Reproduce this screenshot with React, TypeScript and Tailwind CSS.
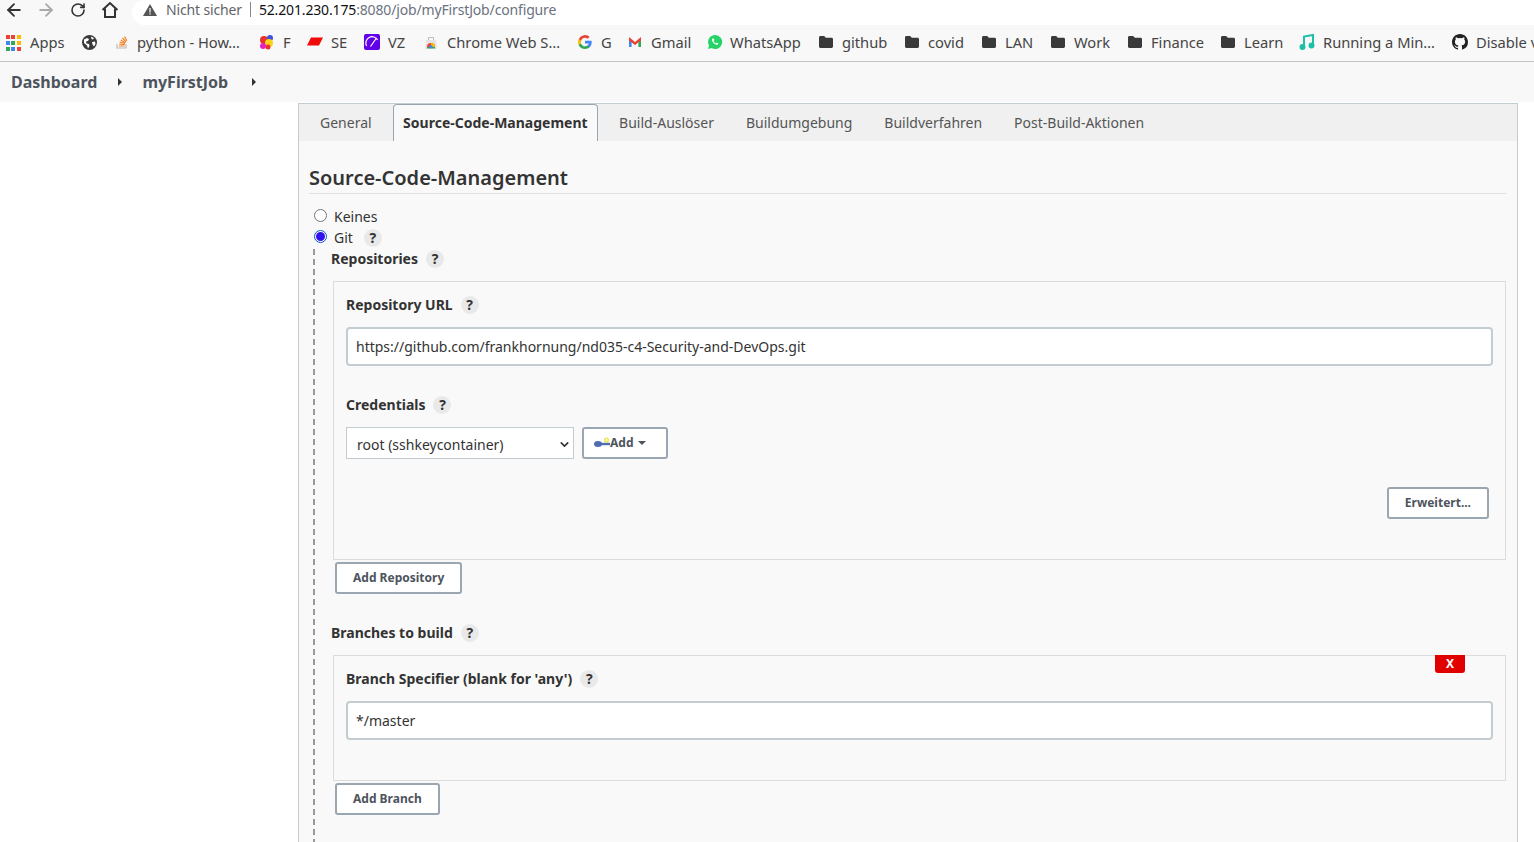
import { ArrowLeft, ArrowRight, RotateCw, ChevronDown } from "lucide-react";
import type { ReactNode } from "react";

const font = "font-['Noto_Sans',sans-serif]";

function Folder() {
  return (
    <svg width="16" height="14" viewBox="0 0 16 14" className="fill-[#3a3a3a]">
      <path d="M1 2.500C1 1.700 1.600 1 2.400 1h3.800l1.600 1.800h5.800c.8 0 1.400.6 1.400 1.400v7.400c0 .8-.6 1.400-1.400 1.400H2.400C1.600 13 1 12.400 1 11.600z" />
    </svg>
  );
}

function HomeIcon() {
  return (
    <svg width="18" height="18" viewBox="0 0 18 18" fill="none" stroke="#333" strokeWidth="2" strokeLinejoin="miter">
      <path d="M1.500 9 9 2l7.500 7" />
      <path d="M4 7.500V16h10V7.500" />
    </svg>
  );
}

function GlobeIcon() {
  return (
    <svg width="15" height="15" viewBox="0 0 15 15">
      <circle cx="7.500" cy="7.500" r="7.500" fill="#3a3a3a" />
      <path d="M2 4.500 5 3l2 1-1 2-2 .5.500 2 2.500.5.500 2-1.500 2.500-1-3L2 8zM9 1.500l3 1.500-1 1.500L9.500 4zM10 7l3-.5.500 2.500-1.500 2.500-1.500-2z" fill="#fff" />
    </svg>
  );
}

function AppsIcon() {
  const colors = ["#ea4335", "#ea4335", "#fbbc04", "#4285f4", "#34a853", "#fbbc04", "#34a853", "#4285f4", "#ea4335"];
  return (
    <div className="grid h-[14px] w-[14px] grid-cols-3 gap-[2px]">
      {colors.map((c, i) => (
        <svg key={i} width="4" height="4"><rect width="4" height="4" fill={c} /></svg>
      ))}
    </div>
  );
}

function StackIcon() {
  return (
    <svg width="16" height="16" viewBox="0 0 16 16" fill="none" strokeWidth="1.200">
      <path d="M3 10v4h9v-4" stroke="#bcbbbb" />
      <path d="M5 12h5.500M5.200 10l5.400.7M5.700 8l5.200 1.500M6.800 6l4.600 2.700M8.500 4l3.600 3.800M10.600 2.500l2.200 4.300" stroke="#f48024" />
    </svg>
  );
}

function ColorBlob() {
  return (
    <svg width="16" height="16" viewBox="0 0 16 16">
      <circle cx="5" cy="6" r="4" fill="#e8322c" />
      <circle cx="11" cy="4" r="3" fill="#3f51e0" />
      <circle cx="10" cy="9" r="4" fill="#f7d417" />
      <circle cx="4" cy="12" r="3" fill="#e91fc4" />
      <circle cx="9" cy="13" r="2.500" fill="#e8322c" />
    </svg>
  );
}

function SeIcon() {
  return (
    <svg width="16" height="16" viewBox="0 0 16 16">
      <path d="M4 3.500h12L12 11.500H0z" fill="#f00a0a" />
    </svg>
  );
}

function VzIcon() {
  return (
    <svg width="16" height="16" viewBox="0 0 16 16">
      <rect width="16" height="16" rx="2" fill="#6200ea" />
      <path d="M2.600 12A6.200 6.200 0 0 1 13.600 6" stroke="#fff" strokeWidth="1.200" fill="none" />
      <path d="M6.500 12.500 12.500 4" stroke="#fff" strokeWidth="1.200" fill="none" />
    </svg>
  );
}

function ChromeStoreIcon() {
  return (
    <svg width="16" height="16" viewBox="0 0 16 16">
      <path d="M3 6h10l1 9H2z" fill="#e4e4e4" />
      <path d="M5.500 6V3.500h5V6" stroke="#bbb" fill="none" />
      <path d="M4 13a4 4 0 0 1 8 0z" fill="#ea4335" />
      <path d="M8 13V9a4 4 0 0 1 4 4z" fill="#fbbc04" />
      <path d="M4 13h8v1.500H4z" fill="#34a853" />
      <circle cx="8" cy="12.600" r="1.600" fill="#4285f4" />
    </svg>
  );
}

function GoogleIcon() {
  return (
    <svg width="14" height="14" viewBox="0 0 18 18">
      <path d="M17.600 9.200c0-.6-.1-1.200-.2-1.800H9v3.500h4.800a4.100 4.100 0 0 1-1.800 2.700v2.200h2.900c1.700-1.600 2.700-3.900 2.700-6.600z" fill="#4285f4" />
      <path d="M9 18c2.400 0 4.500-.8 5.900-2.200L12 13.600c-.8.5-1.800.9-3 .9-2.300 0-4.300-1.600-5-3.700H1v2.300A9 9 0 0 0 9 18z" fill="#34a853" />
      <path d="M4 10.700a5.400 5.400 0 0 1 0-3.400V5H1a9 9 0 0 0 0 8z" fill="#fbbc05" />
      <path d="M9 3.600c1.300 0 2.500.5 3.400 1.300l2.600-2.600A9 9 0 0 0 1 5l3 2.300c.7-2.100 2.700-3.700 5-3.700z" fill="#ea4335" />
    </svg>
  );
}

function GmailIcon() {
  return (
    <svg width="14" height="14" viewBox="0 0 14 14">
      <path d="M1 3v9h2.600V6z" fill="#4285f4" />
      <path d="M10.400 6v6H13V3z" fill="#34a853" />
      <path d="M1 2 7 7l6-5v3.400L7 10 1 5.400z" fill="#ea4335" />
    </svg>
  );
}

function WhatsappIcon() {
  return (
    <svg width="16" height="16" viewBox="0 0 16 16">
      <path d="M8 1a7 7 0 0 0-6 10.500L1 15l3.600-1A7 7 0 1 0 8 1z" fill="#25d366" />
      <path d="M5.500 4.500c-.9.9-.8 2.400.6 4.100 1.500 1.800 3.200 2.600 4.300 2.100.7-.3 1-1 .9-1.400L9.800 8.500l-.9.9C8 9 7 8 6.600 7l.9-.9-.9-1.700z" fill="#fff" />
    </svg>
  );
}

function MusicIcon() {
  return (
    <svg width="16" height="18" viewBox="0 0 16 18" fill="none" stroke="#1fbfa8" strokeWidth="2">
      <path d="M5 14V3.500l9-1.500v10" />
      <circle cx="3.500" cy="14" r="2" fill="#1fbfa8" />
      <circle cx="12.500" cy="12.500" r="2" fill="#1fbfa8" />
    </svg>
  );
}

function GithubIcon() {
  return (
    <svg width="16" height="16" viewBox="0 0 16 16" className="fill-[#222]">
      <path d="M8 0C3.580 0 0 3.580 0 8c0 3.540 2.290 6.530 5.470 7.590.4.070.55-.17.55-.38v-1.340c-2.230.48-2.700-1.070-2.700-1.070-.36-.92-.89-1.170-.89-1.170-.73-.5.060-.49.060-.49.800.06 1.230.82 1.230.82.710 1.220 1.870.87 2.330.66.070-.52.280-.87.510-1.070-1.780-.2-3.640-.89-3.640-3.950 0-.87.310-1.590.82-2.150-.08-.2-.36-1.020.08-2.120 0 0 .67-.21 2.200.82a7.600 7.600 0 0 1 4 0c1.530-1.040 2.200-.82 2.200-.82.44 1.100.16 1.920.08 2.120.51.560.82 1.270.82 2.150 0 3.070-1.870 3.750-3.650 3.950.29.250.54.730.54 1.480v2.200c0 .21.150.46.55.38A8 8 0 0 0 16 8c0-4.420-3.580-8-8-8z" />
    </svg>
  );
}

const bookmarks: { width: string; gap: string; icon: ReactNode; label: string }[] = [
  { width: "w-[76px]", gap: "gap-[10px]", icon: <AppsIcon />, label: "Apps" },
  { width: "w-[32px]", gap: "gap-0", icon: <GlobeIcon />, label: "" },
  { width: "w-[145px]", gap: "gap-[7px]", icon: <StackIcon />, label: "python - How…" },
  { width: "w-[48px]", gap: "gap-[8px]", icon: <ColorBlob />, label: "F" },
  { width: "w-[57px]", gap: "gap-[8px]", icon: <SeIcon />, label: "SE" },
  { width: "w-[59px]", gap: "gap-[8px]", icon: <VzIcon />, label: "VZ" },
  { width: "w-[155px]", gap: "gap-[8px]", icon: <ChromeStoreIcon />, label: "Chrome Web S…" },
  { width: "w-[50px]", gap: "gap-[9px]", icon: <GoogleIcon />, label: "G" },
  { width: "w-[79px]", gap: "gap-[9px]", icon: <GmailIcon />, label: "Gmail" },
  { width: "w-[111px]", gap: "gap-[7px]", icon: <WhatsappIcon />, label: "WhatsApp" },
  { width: "w-[86px]", gap: "gap-[8px]", icon: <Folder />, label: "github" },
  { width: "w-[77px]", gap: "gap-[8px]", icon: <Folder />, label: "covid" },
  { width: "w-[69px]", gap: "gap-[8px]", icon: <Folder />, label: "LAN" },
  { width: "w-[77px]", gap: "gap-[8px]", icon: <Folder />, label: "Work" },
  { width: "w-[93px]", gap: "gap-[8px]", icon: <Folder />, label: "Finance" },
  { width: "w-[79px]", gap: "gap-[8px]", icon: <Folder />, label: "Learn" },
  { width: "w-[153px]", gap: "gap-[8px]", icon: <MusicIcon />, label: "Running a Min…" },
  { width: "w-[90px]", gap: "gap-[8px]", icon: <GithubIcon />, label: "Disable v" },
];

const tabs = ["General", "Source-Code-Management", "Build-Auslöser", "Buildumgebung", "Buildverfahren", "Post-Build-Aktionen"];

function Help({ className = "ml-[8px]" }: { className?: string }) {
  return (
    <span className={`flex h-[18px] w-[18px] items-center justify-center rounded-full bg-[#e9e9e9] text-[14px] font-bold text-[#333] ${className}`}>
      ?
    </span>
  );
}

function Label({ children, className = "" }: { children: ReactNode; className?: string }) {
  return (
    <div className={`flex h-[20px] items-center text-[14px] leading-[20px] font-bold text-[#333] ${className}`}>
      {children}
      <Help />
    </div>
  );
}

function Btn({ children, className = "" }: { children: ReactNode; className?: string }) {
  return (
    <button className={`flex h-[32px] items-center rounded-[3px] border-2 border-[#9aa7b3] bg-white text-[12px] font-bold text-[#4d545d] ${className}`}>
      {children}
    </button>
  );
}

function TextInput({ value }: { value: string }) {
  return (
    <div className="mt-[12px] flex h-[39px] items-center rounded-[4px] border-2 border-[#c3ccd1] bg-white pl-[8px] text-[14px] text-[#333]">
      {value}
    </div>
  );
}

export default function App() {
  return (
    <div className={`h-[842px] w-[1534px] overflow-hidden bg-white ${font}`}>
      <div className="flex h-[25px] items-center bg-[#f8f8f8] text-[#5f6368]">
        <div className="flex h-[25px] w-[132px] items-center pb-[5px] pl-[4px]">
          <ArrowLeft size={20} strokeWidth={2.200} className="text-[#333]" />
          <ArrowRight size={20} strokeWidth={2.200} className="ml-[12px] text-[#aaa]" />
          <RotateCw size={16} strokeWidth={2.400} className="ml-[14px] text-[#333]" />
          <span className="ml-[15px]"><HomeIcon /></span>
        </div>
        <div className="flex h-[25px] flex-1 items-center rounded-l-full bg-white pb-[6px] pl-[10px] text-[14px] tracking-[-0.15px]">
          <svg width="16" height="14" viewBox="0 0 16 14" className="fill-[#555]">
            <path d="M8 1 15 13H1z" />
            <path d="M7.400 5h1.200v4.500H7.400zM7.400 10.300h1.200v1.200H7.400z" fill="#fff" />
          </svg>
          <span className="ml-[8px] text-[#5f6368]">Nicht sicher</span>
          <span className="mr-[5px] ml-[8px] h-[15px] w-px bg-[#888]" />
          <span className="ml-[3px] text-[#111]">52.201.230.175</span>
          <span className="text-[#6b7280]">:8080/job/myFirstJob/configure</span>
        </div>
      </div>

      <div className="flex h-[37px] items-center overflow-hidden border-b border-[#c4c4c4] bg-[#f8f8f8] pb-[2px] pl-[6px] text-[14.700px] whitespace-nowrap text-[#444]">
        {bookmarks.map((b) => (
          <div key={b.label || "globe"} className={`flex shrink-0 items-center ${b.gap} ${b.width}`}>
            {b.icon}
            {b.label && <span>{b.label}</span>}
          </div>
        ))}
      </div>

      <div className="flex h-[40px] items-center bg-[#f8f8f8] pl-[11px] text-[16px] font-bold text-[#4d545d]">
        <span>Dashboard</span>
        <span className="mx-[21px] h-0 w-0 border-y-[4px] border-l-[4px] border-y-transparent border-l-[#333]" />
        <span className="-ml-[1px]">myFirstJob</span>
        <span className="ml-[24px] h-0 w-0 border-y-[4px] border-l-[4px] border-y-transparent border-l-[#333]" />
      </div>

      <div className="mt-[1px] ml-[298px] h-[739px] w-[1220px] border-t border-r border-l border-[#c3ccd1] bg-[#f9f9f9]">
        <div className="flex h-[37px] items-end bg-[#f0f0f0] text-[14px] text-[#555]">
          {tabs.map((t, i) =>
            t === "Source-Code-Management" ? (
              <div
                key={t}
                className="flex h-[37px] items-center rounded-t-[4px] border-x border-t border-[#9aa7b3] bg-[#f9f9f9] px-[9.500px] pb-[1px] font-bold text-[#333]"
              >
                {t}
              </div>
            ) : (
              <div key={t} className={`flex h-[37px] items-center ${i === 0 ? "px-[21px]" : i === 2 ? "pr-[32px] pl-[21px]" : "pr-[32px]"}`}>
                {t}
              </div>
            )
          )}
        </div>

        <div className="pr-[11px] pl-[10px]">
          <h2 className="mt-[22px] border-b border-[#e0e0e0] text-[20px] leading-[30px] font-semibold text-[#333]">
            Source-Code-Management
          </h2>

          <div className="mt-[12px] flex h-[21px] items-center text-[14px] text-[#333]">
            <span className="mb-[2px] ml-[5px] h-[13px] w-[13px] rounded-full border border-[#767676] bg-white" />
            <span className="ml-[7px]">Keines</span>
          </div>
          <div className="flex h-[21px] items-center text-[14px] text-[#333]">
            <span className="mb-[2px] ml-[5px] flex h-[13px] w-[13px] items-center justify-center rounded-full border border-[#0b57d0] bg-white">
              <span className="h-[9px] w-[9px] rounded-full bg-[#3311ee]" />
            </span>
            <span className="ml-[7px]">Git</span>
            <Help className="ml-[11px]" />
          </div>

          <div className="mt-[1px] ml-[4px] border-l-2 border-dashed border-[#999] pl-[16px]">
            <Label>Repositories</Label>

            <div className="mt-[12px] ml-[2px] h-[279px] border border-[#dcdcdc] pt-[13px] pr-[12px] pl-[12px]">
              <Label>Repository URL</Label>
              <TextInput value="https://github.com/frankhornung/nd035-c4-Security-and-DevOps.git" />
              <Label className="mt-[29px]">Credentials</Label>
              <div className="mt-[12px] flex items-center">
                <div className="flex h-[32px] w-[228px] items-center justify-between border border-[#c3ccd1] bg-white pt-[2px] pr-[2px] pl-[10px] text-[14px] text-[#333]">
                  root (sshkeycontainer)
                  <ChevronDown size={13} strokeWidth={3} className="text-[#333]" />
                </div>
                <Btn className="ml-[8px] w-[86px] pl-[10px] text-[12.500px]">
                  <svg width="16" height="12" viewBox="0 0 16 12">
                    <ellipse cx="4" cy="7" rx="4" ry="3" fill="#4e6cb0" />
                    <rect x="6" y="5.800" width="10" height="2.400" fill="#4e6cb0" />
                    <circle cx="12.500" cy="3" r="1.800" fill="none" stroke="#e8e84a" strokeWidth="1.500" />
                  </svg>
                  Add
                  <span className="ml-[5px] h-0 w-0 border-x-[4px] border-t-[4px] border-x-transparent border-t-[#4d545d]" />
                </Btn>
              </div>
              <div className="mt-[28px] flex justify-end pr-[4px]">
                <Btn className="px-[16px]">Erweitert...</Btn>
              </div>
            </div>

            <Btn className="mt-[2px] ml-[4px] px-[16px]">Add Repository</Btn>

            <Label className="mt-[29px]">Branches to build</Label>

            <div className="relative mt-[12px] ml-[2px] h-[126px] border border-[#dcdcdc] pt-[13px] pr-[12px] pl-[12px]">
              <span className="absolute top-[-1px] right-[40px] flex h-[18px] w-[30px] items-center justify-center rounded-b-[3px] bg-[#e00000] text-[12px] font-bold text-white">
                X
              </span>
              <Label>Branch Specifier (blank for 'any')</Label>
              <TextInput value="*/master" />
            </div>

            <Btn className="mt-[2px] ml-[4px] px-[16px]">Add Branch</Btn>
            <div className="h-[40px]" />
          </div>
        </div>
      </div>
    </div>
  );
}
